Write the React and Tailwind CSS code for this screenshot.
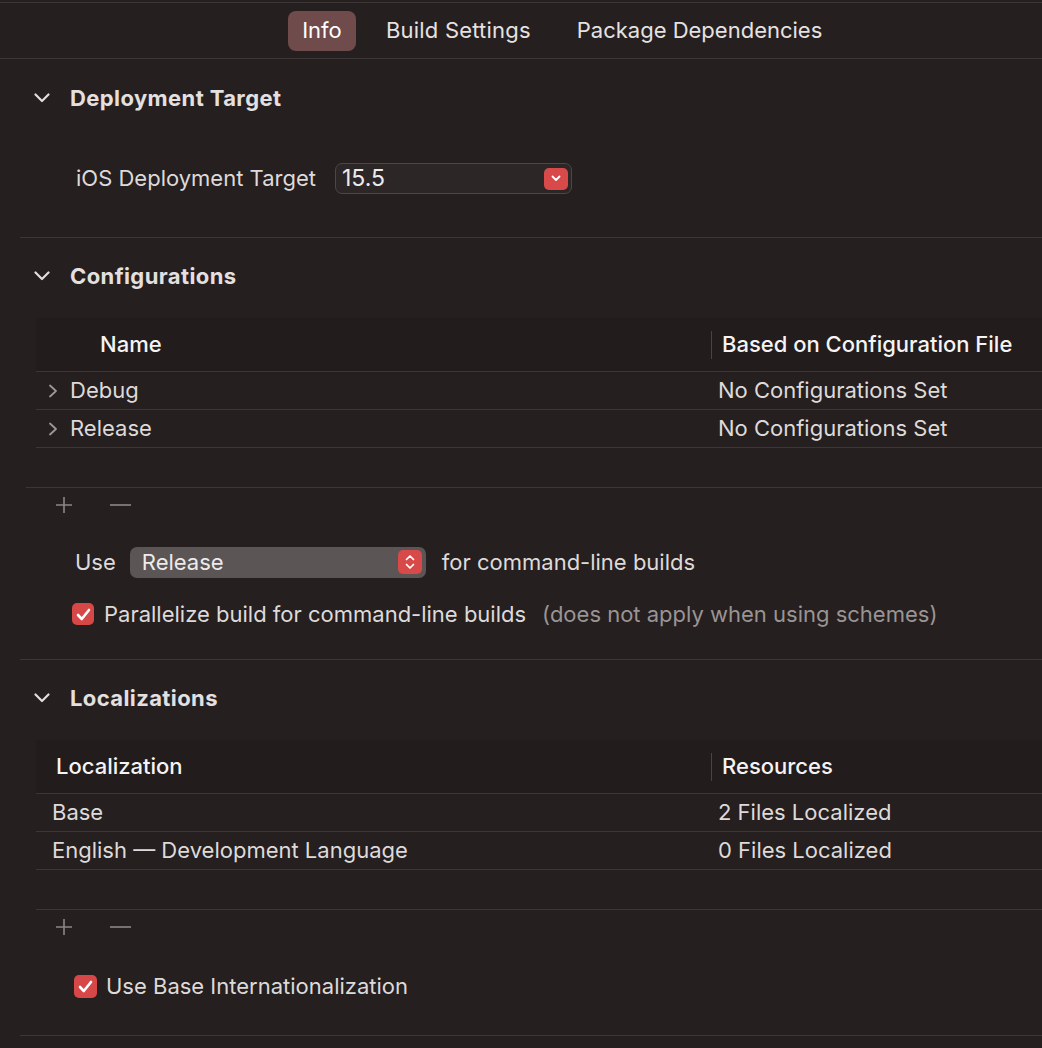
import React from 'react';

const ChevronDown = () => (
  <svg width="16" height="10" viewBox="0 0 16 10" fill="none" className="shrink-0">
    <polyline points="1.5,1.5 8,8 14.5,1.5" stroke="#e2dede" strokeWidth="2.2" strokeLinecap="round" strokeLinejoin="round" />
  </svg>
);

const ChevronRight = () => (
  <svg width="10" height="14" viewBox="0 0 10 14" fill="none" className="shrink-0">
    <polyline points="2,1.5 8,7 2,12.5" stroke="#9d9797" strokeWidth="1.8" strokeLinecap="round" strokeLinejoin="round" />
  </svg>
);

const PlusMinus = () => (
  <div className="flex items-center h-[34px] pl-[19px] gap-[37px]">
    <svg width="18" height="18" viewBox="0 0 18 18">
      <path d="M9 1v16M1 9h16" stroke="#8c8686" strokeWidth="1.6" />
    </svg>
    <svg width="21" height="18" viewBox="0 0 21 18">
      <path d="M0 9h21" stroke="#8c8686" strokeWidth="1.6" />
    </svg>
  </div>
);

const Checkbox = ({ size = 'w-[22px] h-[22px]' }) => (
  <div className={`${size} rounded-[5px] bg-[#d64848] flex items-center justify-center shrink-0`}>
    <svg width="15" height="13" viewBox="0 0 15 13" fill="none">
      <polyline points="2,7 5.8,11 13,2" stroke="white" strokeWidth="2.6" strokeLinecap="round" strokeLinejoin="round" />
    </svg>
  </div>
);

const Separator = () => <div className="h-px bg-[#3d3636] ml-[20px]" />;

const SectionHeader = ({ title, height = 'h-[76px]' }) => (
  <div className={`flex items-center ${height} pl-[34px]`}>
    <ChevronDown />
    <span className="ml-[20px] text-[22px] tracking-[0.4px] font-bold text-[#e4e0e0]">{title}</span>
  </div>
);

const TableHeader = ({ left, right, leftPad }) => (
  <div className="flex h-[54px] border-b border-[#3d3636] bg-[#221c1c] items-center">
    <div className={`w-[675px] ${leftPad} text-[22px] font-medium text-[#f5f3f3]`}>{left}</div>
    <div className="w-px h-[28px] bg-[#4a4343]" />
    <div className="pl-[10px] text-[22px] font-medium text-[#f5f3f3] whitespace-nowrap">{right}</div>
  </div>
);

const Row = ({ left, right, chevron }) => (
  <div className="flex h-[38px] border-b border-[#3d3636] items-center text-[22px] text-[#dedada]">
    <div className={`w-[676px] flex items-center ${chevron ? 'pl-[12px]' : 'pl-[16px]'}`}>
      {chevron && <ChevronRight />}
      <span className={chevron ? 'ml-[12px]' : ''}>{left}</span>
    </div>
    <div className="pl-[6px] whitespace-nowrap">{right}</div>
  </div>
);

export default function App() {
  return (
    <div
      className="w-[1042px] h-[1048px] bg-[#251f1f] overflow-hidden"
      style={{ fontFamily: 'Inter, "Noto Sans", sans-serif' }}
    >
      <div className="pt-[2px]">
        <div className="h-px bg-[#3d3636]" />
        {/* tab bar */}
        <div className="h-[55px] flex items-center pl-[288px] text-[22px] text-[#e6e2e2]">
          <div className="h-[40px] w-[68px] justify-center rounded-[8px] bg-[#6f4b4b] flex items-center text-white">Info</div>
          <div className="ml-[30px] tracking-[0.2px]">Build Settings</div>
          <div className="ml-[46px]">Package Dependencies</div>
        </div>
        <div className="h-px bg-[#3d3636]" />

        {/* Deployment Target */}
        <div className="h-[178px]">
          <SectionHeader title="Deployment Target" height="h-[78px]" />
          <div className="mt-[26px] flex items-center pl-[76px] h-[31px]">
            <span className="text-[22px] text-[#dedada]">iOS Deployment Target</span>
            <div className="ml-[19px] w-[237px] h-[31px] rounded-[7px] border border-[#4d4646] bg-[#2c2626] flex items-center justify-between pl-[6px] pr-[3px]">
              <span className="text-[23px] text-[#eeeaea]">15.5</span>
              <div className="w-[24px] h-[22px] rounded-[5px] bg-[#d84a4a] flex items-center justify-center">
                <svg width="10" height="7" viewBox="0 0 10 7" fill="none">
                  <polyline points="1.5,1.5 5,5 8.5,1.5" stroke="white" strokeWidth="1.8" strokeLinecap="round" strokeLinejoin="round" />
                </svg>
              </div>
            </div>
          </div>
        </div>
        <Separator />

        {/* Configurations */}
        <div className="h-[421px]">
          <SectionHeader title="Configurations" />
          <div className="mt-[4px] ml-[36px]">
            <TableHeader left="Name" right="Based on Configuration File" leftPad="pl-[64px]" />
            <Row left="Debug" right="No Configurations Set" chevron />
            <Row left="Release" right="No Configurations Set" chevron />
          </div>
          <div className="h-[39px]" />
          <div className="h-px bg-[#3d3636] ml-[26px]" />
          <div className="ml-[36px]">
            <PlusMinus />
          </div>
          <div className="mt-[24px] flex items-center pl-[75px] h-[32px] text-[22px] text-[#dedada]">
            <span>Use</span>
            <div className="ml-[14px] w-[296px] h-[31px] rounded-[7px] bg-[#5b5555] flex items-center justify-between pl-[12px] pr-[4px]">
              <span className="text-[#eeeaea]">Release</span>
              <div className="w-[24px] h-[24px] rounded-[5px] bg-[#d84a4a] flex items-center justify-center">
                <svg width="10" height="16" viewBox="0 0 10 16" fill="none">
                  <polyline points="1.5,5.5 5,2 8.5,5.5" stroke="white" strokeWidth="1.7" strokeLinecap="round" strokeLinejoin="round" />
                  <polyline points="1.5,10.5 5,14 8.5,10.5" stroke="white" strokeWidth="1.7" strokeLinecap="round" strokeLinejoin="round" />
                </svg>
              </div>
            </div>
            <span className="ml-[16px]">for command-line builds</span>
          </div>
          <div className="mt-[24px] flex items-center pl-[72px] h-[24px] text-[22px] whitespace-nowrap">
            <Checkbox />
            <span className="ml-[10px] text-[#dedada]">Parallelize build for command-line builds</span>
            <span className="ml-[16px] text-[#9a9494]">(does not apply when using schemes)</span>
          </div>
        </div>
        <Separator />

        {/* Localizations */}
        <div className="h-[375px]">
          <SectionHeader title="Localizations" />
          <div className="mt-[4px] ml-[36px]">
            <TableHeader left="Localization" right="Resources" leftPad="pl-[20px]" />
            <Row left="Base" right="2 Files Localized" />
            <Row left="English — Development Language" right="0 Files Localized" />
          </div>
          <div className="h-[39px]" />
          <div className="h-px bg-[#3d3636] ml-[36px]" />
          <div className="ml-[36px]">
            <PlusMinus />
          </div>
          <div className="mt-[30px] flex items-center pl-[74px] h-[24px] text-[22px]">
            <Checkbox size="w-[23px] h-[23px]" />
            <span className="ml-[9px] text-[#dedada]">Use Base Internationalization</span>
          </div>
        </div>
        <Separator />
      </div>
    </div>
  );
}
